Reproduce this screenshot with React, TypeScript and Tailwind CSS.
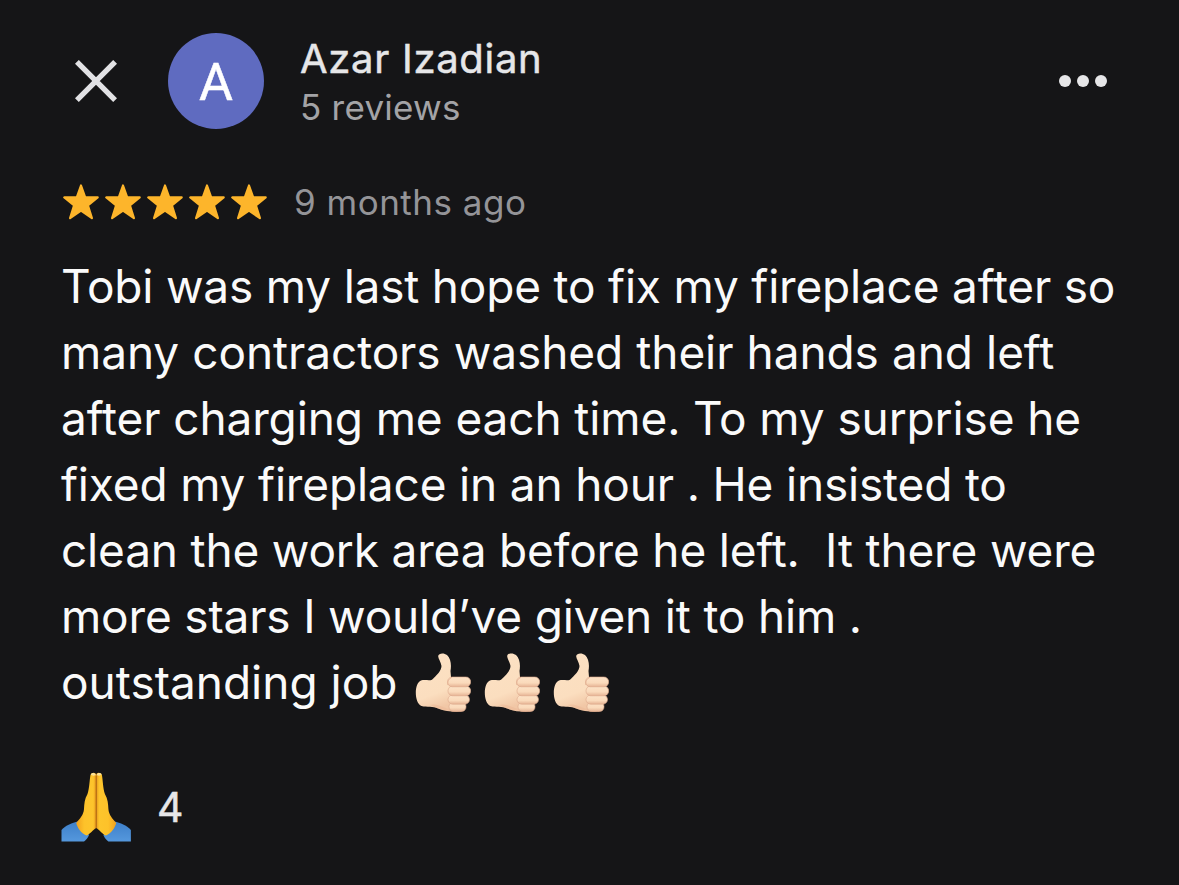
import React from 'react';

interface Line {
  text: string;
  className: string;
}

const lines: Line[] = [
  { text: 'Tobi was my last hope to fix my fireplace after so', className: 'tracking-[-0.2px]' },
  { text: 'many contractors washed their hands and left', className: 'tracking-[-0.1px] [word-spacing:0.4px]' },
  { text: 'after charging me each time. To my surprise he', className: 'tracking-[-0.12px]' },
  { text: 'fixed my fireplace in an hour . He insisted to', className: 'tracking-[-0.17px]' },
  { text: 'clean the work area before he left.  It there were', className: 'tracking-[-0.18px]' },
  { text: 'more stars I would’ve given it to him .', className: 'tracking-[-0.18px]' },
];

const Star: React.FC = () => (
  <svg viewBox="0 0 36 36" className="h-9 w-9" fill="#fdb52b" stroke="#fdb52b" strokeWidth="2.200" strokeLinejoin="round">
    <path d="M18 1.500 22.200 13.400H34.700L24.900 21.300 28.900 34.200 18 26.700 7.100 34.200 11.100 21.300 1.300 13.400H13.800Z" />
  </svg>
);

const ThumbsUp: React.FC = () => (
  <svg viewBox="0 0 56 60" className="h-[60px] w-14">
    <defs>
      <linearGradient id="skin" x1="0" y1="0" x2="0.3" y2="1">
        <stop offset="0" stopColor="#fce1c4" />
        <stop offset="0.75" stopColor="#fbdebf" />
        <stop offset="1" stopColor="#f1c7a6" />
      </linearGradient>
      <linearGradient id="finger" x1="0" y1="0" x2="0" y2="1">
        <stop offset="0" stopColor="#fde3c8" />
        <stop offset="0.6" stopColor="#fadabb" />
        <stop offset="1" stopColor="#e6b394" />
      </linearGradient>
    </defs>
    <path
      d="M6 27.500C10 26.300 14 28 17 26.700C22 22 26.300 18 26.500 13C26 9 23 5.500 23.200 3C23.500 0 29 -0.500 32 2C36 6 36.500 12 35.500 18L36 24L43 28V56L47 58.500C39 59 30 58.500 23 55.500C18 53 12 54.500 6.500 53C-1 50 -1 30 6 27.500Z"
      fill="url(#skin)"
    />
    <path d="M15 52C21 50 27 54 34 56L36 58C28 58 22 55 15 52Z" fill="#ecb796" opacity="0.5" />
    <g fill="url(#finger)" stroke="#dca88b" strokeWidth="0.6">
      <rect x="34" y="49" width="17" height="9.500" rx="4.500" />
      <rect x="33" y="42" width="21.500" height="9.200" rx="4.600" />
      <rect x="33" y="33" width="22.700" height="9.800" rx="4.800" />
      <rect x="32.500" y="24" width="23.200" height="9.800" rx="4.800" />
    </g>
    <path d="M33 32C32.300 28.500 33.500 26 37 24.300" fill="none" stroke="#e3ae90" strokeWidth="0.9" />
  </svg>
);

const FoldedHands: React.FC = () => (
  <svg viewBox="0 0 70 70" className="h-[70px] w-[70px]">
    <defs>
      <linearGradient id="palm" x1="0" x2="1">
        <stop offset="0" stopColor="#f0a01c" />
        <stop offset="0.4" stopColor="#fdc22a" />
        <stop offset="0.85" stopColor="#fdc52c" />
        <stop offset="1" stopColor="#e8991a" />
      </linearGradient>
      <linearGradient id="sleeve" x1="0" y1="0" x2="0" y2="1">
        <stop offset="0" stopColor="#3d7fc9" />
        <stop offset="1" stopColor="#5598dd" />
      </linearGradient>
      <g id="half">
        <path d="M0.500 58C5 53 11 51 17 49.500L28 63C27 66 25 68 23 69.500H0.500Z" fill="url(#sleeve)" />
        <path
          d="M29.500 3C30.500 0 35 0 35.200 3V56C32 57.500 29 62.500 25.500 63.500C20 61.500 16 55 15.200 51C19 46.500 22.500 43 23 37C23.300 32 23.500 27 26.500 22C28.500 16 28.500 8 29.500 3Z"
          fill="url(#palm)"
        />
        <path d="M29.800 2.600C30.500 0.500 34 0.500 34.700 2.900C33 4 31.200 4 29.800 2.600Z" fill="#fbe29a" />
      </g>
    </defs>
    <use href="#half" />
    <use href="#half" transform="translate(70.400 0) scale(-1 1)" />
    <path d="M35.200 4V56" stroke="#b96d14" strokeWidth="1.100" />
  </svg>
);

const App: React.FC = () => {
  return (
    <div className="h-[885px] w-[1179px] overflow-hidden bg-[#151517] font-['Inter',sans-serif] text-[#e6e6e8]">
      <header className="flex h-[161px] items-center pl-[75px] pr-[72px]">
        <svg viewBox="0 0 42 42" className="h-[42px] w-[42px]" stroke="#e2e2e5" strokeWidth="5.400">
          <path d="M1.900 1.900 40.100 40.100M40.100 1.900 1.900 40.100" />
        </svg>
        <div className="ml-[51px] flex h-24 w-24 items-center justify-center rounded-full bg-[#5f6bc0] font-['Roboto',sans-serif] text-[52px] leading-none text-white">
          <span className="pt-[4px] [-webkit-text-stroke:0.5px]">A</span>
        </div>
        <div className="ml-9 flex-1 whitespace-nowrap pt-0.5">
          <p className="text-[40px] leading-[50px] tracking-[0.7px] [-webkit-text-stroke:0.5px]">Azar Izadian</p>
          <p className="text-[35px] leading-[46px] tracking-[0.25px] text-[#a3a3a6]">5 reviews</p>
        </div>
        <div className="flex gap-1.5">
          <span className="h-3 w-3 rounded-full bg-[#e6e6e8]" />
          <span className="h-3 w-3 rounded-full bg-[#e6e6e8]" />
          <span className="h-3 w-3 rounded-full bg-[#e6e6e8]" />
        </div>
      </header>

      <div className="flex h-[82px] items-center pl-[63px]">
        <div className="flex gap-1.5">
          {[1, 2, 3, 4, 5].map((star) => (
            <Star key={star} />
          ))}
        </div>
        <span className="ml-[27px] text-[35px] leading-none tracking-[0.5px] text-[#949498]">9 months ago</span>
      </div>

      <div className="mt-[10px] pl-[61px] text-[46px] leading-[66px] text-[#fafafa]">
        {lines.map((line) => (
          <p key={line.text} className="whitespace-pre">
            <span className={line.className}>{line.text}</span>
          </p>
        ))}
        <div className="flex h-[66px] whitespace-nowrap">
          <span className="w-[354px]">outstanding job</span>
          <div className="flex gap-[13px] pt-1">
            <ThumbsUp />
            <ThumbsUp />
            <ThumbsUp />
          </div>
        </div>
      </div>

      <footer className="mt-[57px] flex items-center pl-[61px]">
        <FoldedHands />
        <span className="ml-[26px] text-[41px] leading-none [-webkit-text-stroke:0.5px]">4</span>
      </footer>
    </div>
  );
};

export default App;
